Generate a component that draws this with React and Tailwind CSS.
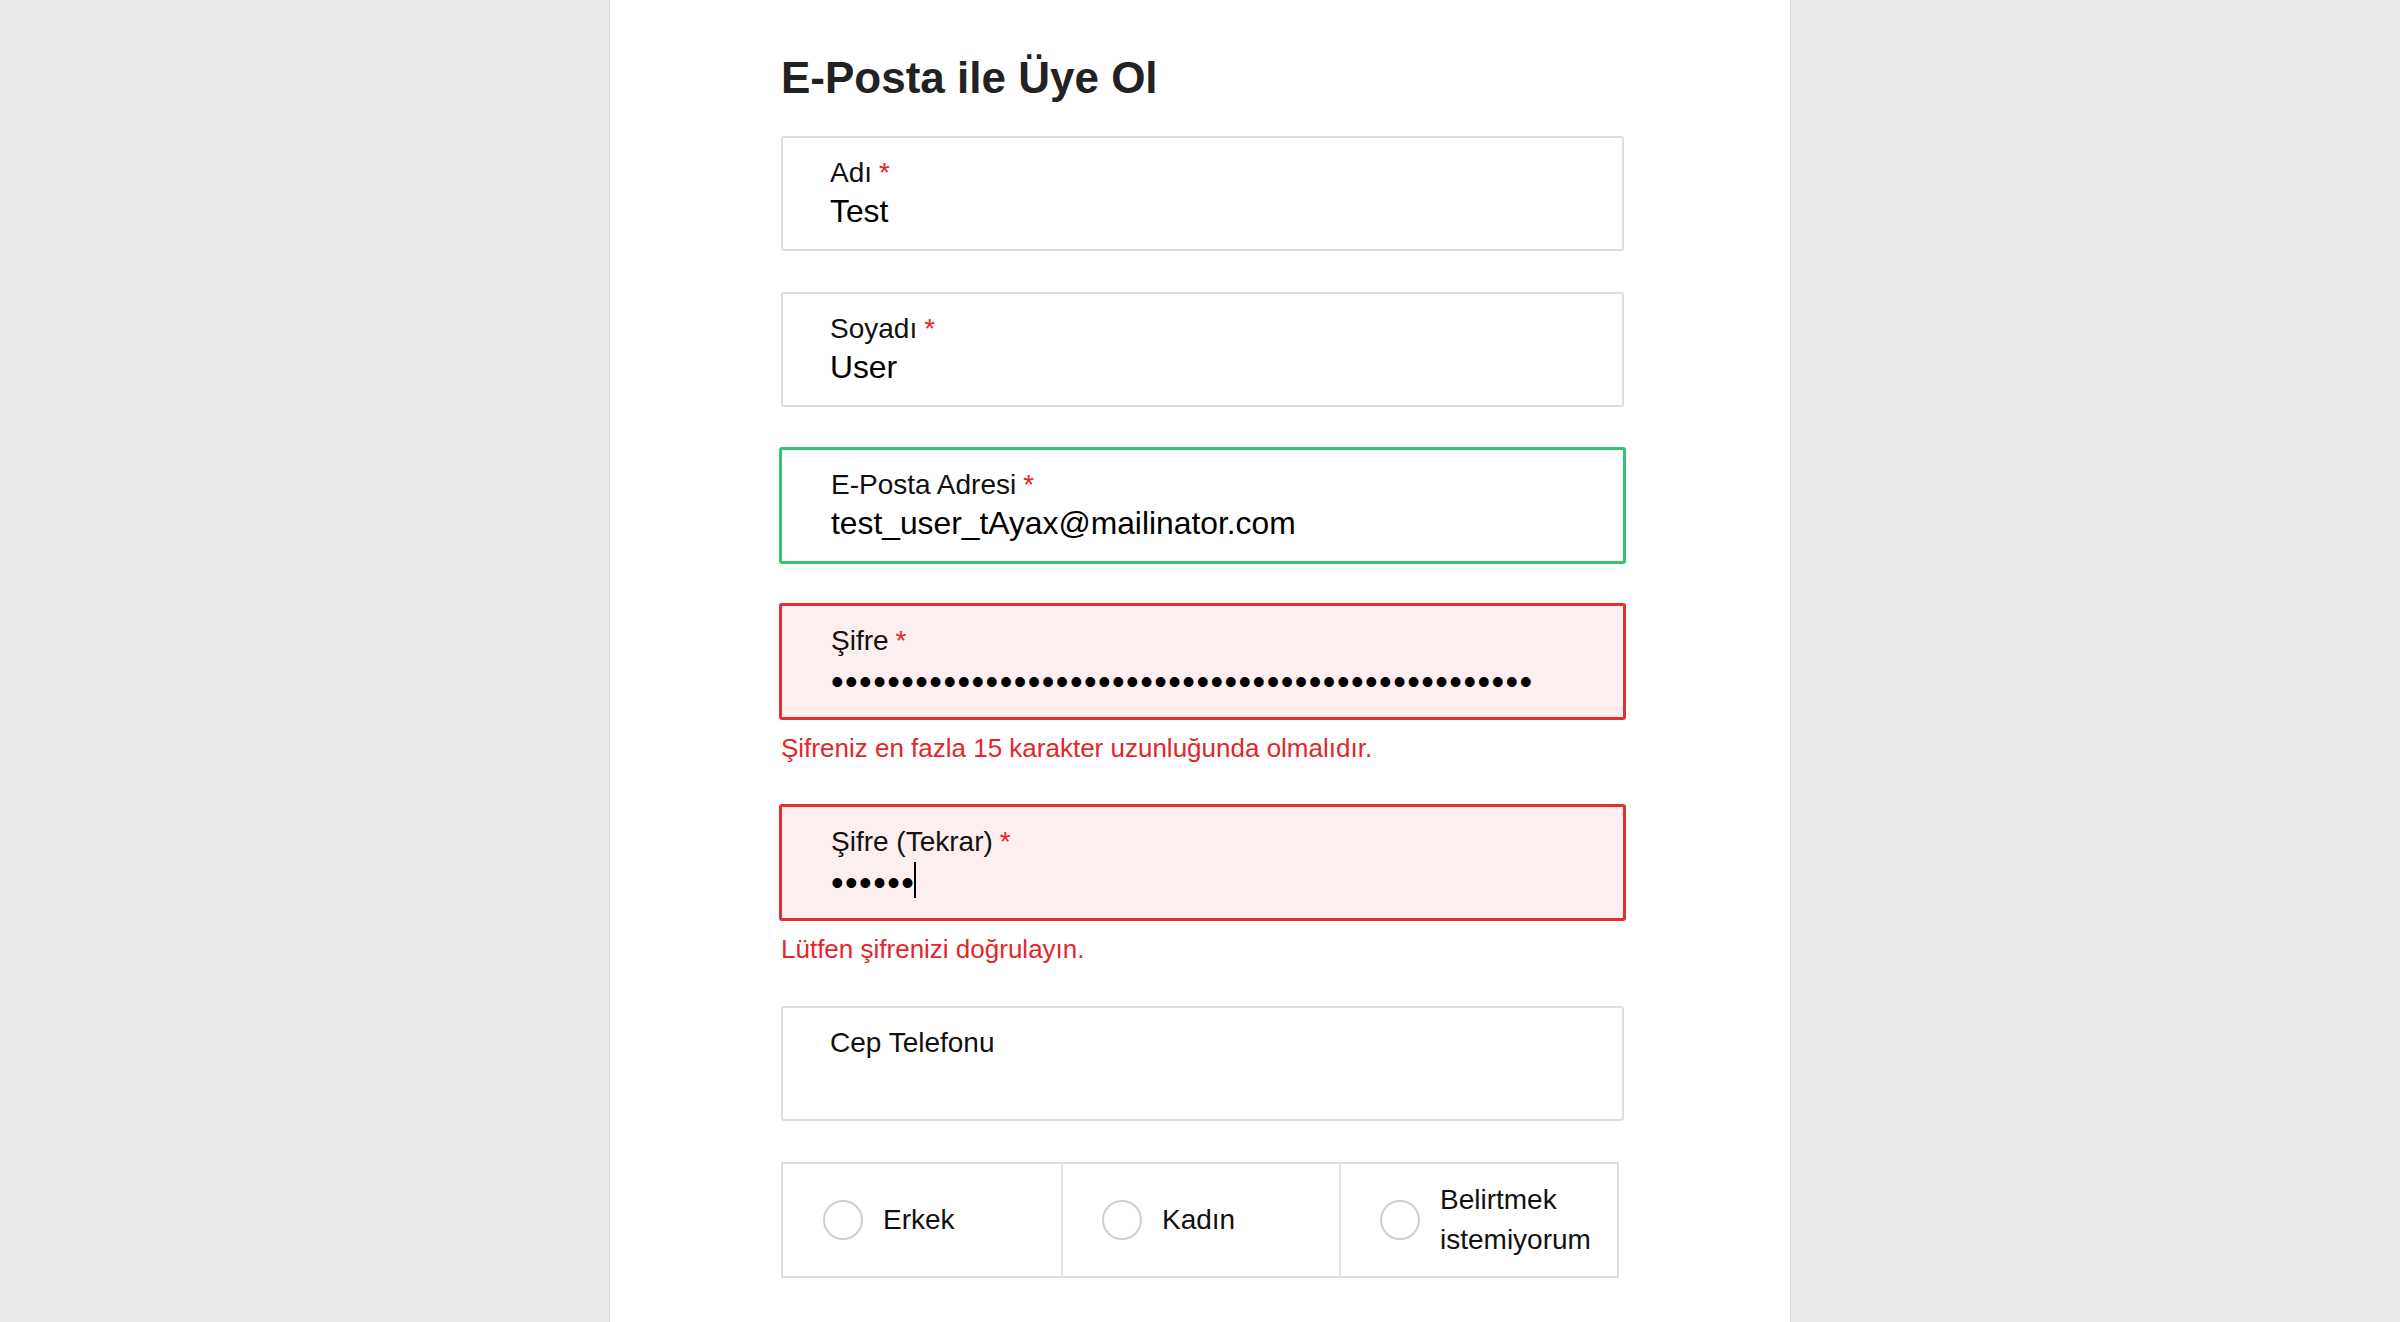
import React from "react";

const font = { fontFamily: '"Liberation Sans", Arial, sans-serif' };

const Req = () => <span className="ml-[7px] text-[#e3262b]">*</span>;

const Dots = ({ count, caret }) => (
  <div className="flex items-start h-[36px] pt-[3px]">
    <span className="text-[36px] leading-[36px] tracking-[1.45px] text-black">
      {"•".repeat(count)}
    </span>
    {caret && <span className="inline-block w-[2px] h-[36px] -mt-[3px] -ml-[1px] bg-black" />}
  </div>
);

const Field = ({ label, required, state, children }) => {
  const box =
    state === "error"
      ? "h-[117px] -mx-[2px] -my-[1px] border-[3px] border-[#e4302b] bg-[#fdeeef] pl-[49px]"
      : state === "valid"
      ? "h-[117px] -mx-[2px] -my-[1px] border-[3px] border-[#36c46e] bg-white pl-[49px]"
      : "h-[115px] border-2 border-[#dedede] bg-white pl-[47px]";

  return (
    <div className={`rounded-[3px] pt-[19px] ${box}`}>
      <div className="text-[28px] leading-[32px] text-[#111]">
        {label}
        {required && <Req />}
      </div>
      <div className="mt-[4px] text-[31.8px] leading-[36px] text-black">{children}</div>
    </div>
  );
};

const ErrorText = ({ children }) => (
  <p className="mt-[13px] text-[26px] leading-[32px] text-[#e3262b]">{children}</p>
);

const Radio = ({ label, first }) => (
  <div
    className={`flex items-center ${
      first ? "pl-[40px]" : "pl-[39px] border-l-2 border-[#e3e3e3]"
    }`}
  >
    <span className="shrink-0 w-[40px] h-[40px] rounded-full border-2 border-[#cfcfcf] bg-white" />
    <span className="ml-[20px] pr-[12px] text-[28px] leading-[40px] text-[#111]">{label}</span>
  </div>
);

export default function App() {
  return (
    <div className="min-h-screen bg-[#e9e9e9]" style={font}>
      <div className="w-[1182px] min-h-[1322px] mx-auto bg-white border-x border-[#dadada] pl-[171px] pt-[52px]">
        <div className="w-[843px]">
          <h1 className="text-[44px] leading-[52px] font-bold text-[#222] mb-[32px]">
            E-Posta ile Üye Ol
          </h1>

          <div className="flex flex-col gap-[41px]">
            <Field label="Adı" required>
              Test
            </Field>

            <Field label="Soyadı" required>
              User
            </Field>

            <Field label="E-Posta Adresi" required state="valid">
              test_user_tAyax@mailinator.com
            </Field>

            <div>
              <Field label="Şifre" required state="error">
                <Dots count={50} />
              </Field>
              <ErrorText>Şifreniz en fazla 15 karakter uzunluğunda olmalıdır.</ErrorText>
            </div>

            <div>
              <Field label="Şifre (Tekrar)" required state="error">
                <Dots count={6} caret />
              </Field>
              <ErrorText>Lütfen şifrenizi doğrulayın.</ErrorText>
            </div>

            <Field label="Cep Telefonu">
              <span>&nbsp;</span>
            </Field>

            <div className="w-[838px] h-[116px] grid grid-cols-3 border-2 border-[#dedede]">
              <Radio label="Erkek" first />
              <Radio label="Kadın" />
              <Radio label="Belirtmek istemiyorum" />
            </div>
          </div>
        </div>
      </div>
    </div>
  );
}
